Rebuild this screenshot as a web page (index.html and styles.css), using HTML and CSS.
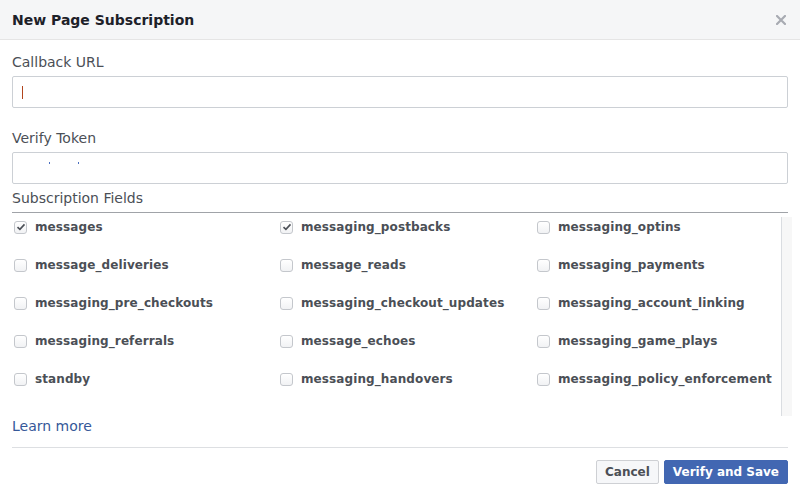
FILE: index.html
```html
<!DOCTYPE html>
<html>
<head>
<meta charset="utf-8">
<link rel="stylesheet" href="styles.css">
</head>
<body>
<div class="dialog">
  <div class="header">
    <span class="title">New Page Subscription</span>
    <svg class="close" width="10" height="10" viewBox="0 0 10 10"><path d="M1 1L9 9M9 1L1 9" stroke="#a8abb2" stroke-width="2.2" stroke-linecap="square"/></svg>
  </div>
  <div class="content">
    <div class="label">Callback URL</div>
    <div class="input"><span class="caret"></span></div>
    <div class="label second">Verify Token</div>
    <div class="input token"><span class="dot"></span><span class="dot"></span></div>
    <div class="section">Subscription Fields</div>
    <div class="fields">
      <div class="grid">
        <div class="field"><span class="cb checked"><svg width="10" height="10" viewBox="0 0 10 10"><path d="M1.5 5.2L3.9 7.4L8.5 2.4" fill="none" stroke="#4b4f56" stroke-width="1.6"/></svg></span>messages</div>
        <div class="field"><span class="cb checked"><svg width="10" height="10" viewBox="0 0 10 10"><path d="M1.5 5.2L3.9 7.4L8.5 2.4" fill="none" stroke="#4b4f56" stroke-width="1.6"/></svg></span>messaging_postbacks</div>
        <div class="field"><span class="cb"></span>messaging_optins</div>
        <div class="field"><span class="cb"></span>message_deliveries</div>
        <div class="field"><span class="cb"></span>message_reads</div>
        <div class="field"><span class="cb"></span>messaging_payments</div>
        <div class="field"><span class="cb"></span>messaging_pre_checkouts</div>
        <div class="field"><span class="cb"></span>messaging_checkout_updates</div>
        <div class="field"><span class="cb"></span>messaging_account_linking</div>
        <div class="field"><span class="cb"></span>messaging_referrals</div>
        <div class="field"><span class="cb"></span>message_echoes</div>
        <div class="field"><span class="cb"></span>messaging_game_plays</div>
        <div class="field"><span class="cb"></span>standby</div>
        <div class="field"><span class="cb"></span>messaging_handovers</div>
        <div class="field"><span class="cb"></span>messaging_policy_enforcement</div>
      </div>
      <div class="track"></div>
    </div>
    <a class="learn" href="#">Learn more</a>
  </div>
  <div class="footer">
    <button class="btn">Cancel</button>
    <button class="btn primary">Verify and Save</button>
  </div>
</div>
</body>
</html>
```
FILE: styles.css
```css
html, body {
  margin: 0;
  padding: 0;
  background: #fff;
}
body {
  font-family: "DejaVu Sans", sans-serif;
  color: #4b4f56;
  width: 800px;
  height: 496px;
  overflow: hidden;
}
.header {
  height: 39px;
  background: #f5f6f7;
  border-bottom: 1px solid #e5e5e5;
  display: flex;
  align-items: center;
  justify-content: space-between;
  padding: 0 14px 0 12px;
}
.title {
  font-size: 14px;
  font-weight: bold;
  color: #1d2129;
}
.close {
  display: block;
  margin-top: 1px;
}
.content {
  padding: 13px 12px 0 12px;
}
.label {
  font-size: 14px;
  line-height: 18px;
  margin-bottom: 5px;
}
.label.second {
  margin-top: 21px;
}
.input {
  height: 30px;
  border: 1px solid #ccd0d5;
  border-radius: 2px;
  display: flex;
  align-items: center;
  padding-left: 9px;
}
.caret {
  width: 1px;
  height: 13px;
  background: #b2451d;
}
.token {
  align-items: flex-start;
}
.dot {
  width: 1px;
  height: 2px;
  background: #4a6fc0;
  margin-top: 9px;
  margin-left: 27px;
}
.dot + .dot {
  margin-left: 28px;
}
.section {
  font-size: 14px;
  line-height: 18px;
  margin-top: 5px;
  padding-bottom: 5px;
  border-bottom: 1px solid #a0a3a8;
}
.fields {
  display: flex;
  margin-top: 4px;
  margin-right: -4px;
  height: 199px;
}
.grid {
  flex: 1;
  display: grid;
  grid-template-columns: 266px 257px 1fr;
  row-gap: 20px;
  align-content: start;
  padding-top: 1px;
}
.field {
  display: flex;
  align-items: center;
  height: 18px;
  font-size: 12px;
  font-weight: bold;
  color: #4b4f56;
  white-space: nowrap;
  letter-spacing: 0.1px;
}
.cb {
  box-sizing: border-box;
  width: 13px;
  height: 13px;
  margin-left: 2px;
  margin-right: 8px;
  border: 1px solid #c4c7cc;
  border-radius: 3px;
  background: linear-gradient(#ffffff, #f1f2f4);
  display: flex;
  align-items: center;
  justify-content: center;
}
.cb svg {
  display: block;
}
.track {
  width: 10px;
  border-left: 1px solid #dadde1;
  background: #f7f7f7;
}
.learn {
  display: block;
  font-size: 14px;
  line-height: 18px;
  margin-top: 1px;
  color: #365899;
  text-decoration: none;
  padding-bottom: 12px;
  border-bottom: 1px solid #dddfe2;
}
.footer {
  display: flex;
  justify-content: flex-end;
  gap: 5px;
  padding: 12px 12px 0 12px;
}
.btn {
  font-family: "DejaVu Sans", sans-serif;
  font-size: 12px;
  font-weight: bold;
  height: 24px;
  padding: 0 8px;
  border: 1px solid #ced0d4;
  border-radius: 2px;
  background: #f6f7f9;
  color: #4b4f56;
  line-height: 22px;
}
.btn.primary {
  background: #4267b2;
  border-color: #4267b2;
  color: #fff;
}
```
